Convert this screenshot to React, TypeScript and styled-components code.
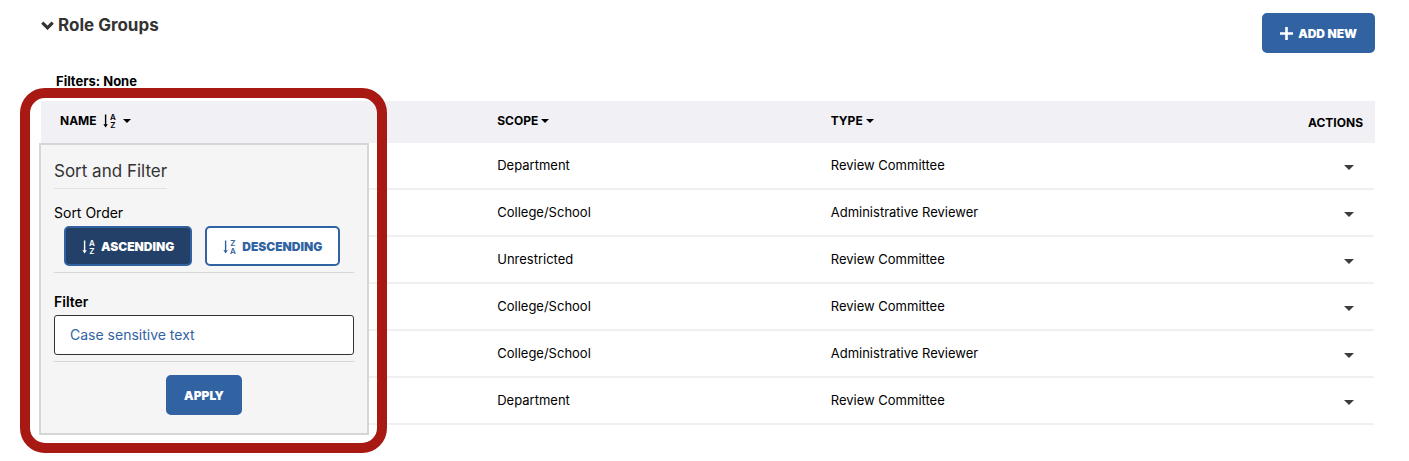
import React from "react";
import styled, { createGlobalStyle, css } from "styled-components";

const BLUE = "#3163a3";
const NAVY = "#234168";

const GlobalStyle = createGlobalStyle`
  *, *::before, *::after { box-sizing: border-box; }
  body {
    margin: 0;
    background: #fff;
    color: #000;
    font-family: Inter, "Liberation Sans", sans-serif;
    font-size: 13px;
    line-height: 20px;
  }
  button, input { font: inherit; }
`;

const Page = styled.main`
  padding: 13px 34px 36px 41px;
`;

const SectionHeader = styled.header`
  display: flex;
  align-items: flex-start;
  justify-content: space-between;
`;

const SectionTitle = styled.h2`
  margin: 0;
  font-size: 17px;
  font-weight: 700;
  line-height: 24px;
  color: #333;
`;

const SectionToggle = styled.button`
  display: flex;
  align-items: center;
  gap: 4px;
  padding: 0;
  border: 0;
  background: none;
  color: inherit;
  cursor: pointer;
`;

const Button = styled.button<{ $variant?: "solid" | "pressed" | "outline" }>`
  display: inline-flex;
  align-items: center;
  justify-content: center;
  gap: 5px;
  height: 40px;
  padding: 1px 16px 0;
  border: 2px solid ${BLUE};
  border-radius: 5px;
  background: ${BLUE};
  color: #fff;
  font-size: 12px;
  font-weight: 900;
  white-space: nowrap;
  cursor: pointer;
  ${({ $variant }) => $variant === "pressed" && css`background: ${NAVY};`}
  ${({ $variant }) => $variant === "outline" && css`background: #fff; color: ${BLUE};`}
`;

const ActiveFilters = styled.p`
  margin: 18px 0 10px 15px;
  font-weight: 700;
`;

const TableArea = styled.div`
  position: relative;
`;

const Table = styled.table`
  width: 100%;
  table-layout: fixed;
  border-collapse: separate;
  border-spacing: 0;
`;

const HeadCell = styled.th<{ $width?: string; $align?: "right" }>`
  width: ${({ $width }) => $width ?? "auto"};
  height: 42px;
  padding: ${({ $align }) => ($align ? "2px 12px 0 0" : "0 0 2px 16px")};
  background: #f1f0f5;
  font-size: 12px;
  font-weight: 700;
  text-align: ${({ $align }) => $align ?? "left"};
  &:first-child { padding-left: 19px; }
`;

const SortButton = styled.button<{ $gap: number }>`
  display: flex;
  align-items: center;
  gap: ${({ $gap }) => $gap}px;
  padding: 0;
  border: 0;
  background: none;
  color: inherit;
  cursor: pointer;
`;

const Cell = styled.td<{ $align?: "right" }>`
  height: 47px;
  padding: 0 16px 2px;
  border-bottom: 2px solid #f0f0f0;
  text-align: ${({ $align }) => $align ?? "left"};
  &:last-child {
    padding-right: 19px;
    border-right: 2px solid #fff;
  }
`;

const RowMenuButton = styled.button`
  display: inline-flex;
  padding: 4px 0 0;
  border: 0;
  background: none;
  color: #3c3c3c;
  vertical-align: middle;
  cursor: pointer;
`;

const PopoverAnchor = styled.div`
  position: absolute;
  top: 42px;
  left: -2px;
  width: 330px;
`;

const Callout = styled.div`
  position: absolute;
  inset: -55px -18px -18px -19px;
  border: 10px solid #a71912;
  border-radius: 25px;
  pointer-events: none;
`;

const Popover = styled.form`
  padding: 15px 13px 18px;
  border: 2px solid #d6d6d6;
  background: #f5f5f5;
`;

const PopoverTitle = styled.h3`
  width: fit-content;
  margin: 0 0 14px;
  padding-bottom: 6px;
  border-bottom: 1px solid #e2e2e2;
  color: #333;
  font-size: 17px;
  font-weight: 400;
  line-height: 22px;
`;

const Group = styled.fieldset`
  min-width: 0;
  margin: 0;
  padding: 0 0 6px;
  border: 0;
  border-bottom: 1px solid #d6d6d6;
`;

const GroupLegend = styled.legend`
  padding: 0 0 3px;
  font-size: 14px;
`;

const OrderButtons = styled.div`
  display: flex;
  gap: 13px;
  padding-left: 10px;
`;

const FilterField = styled.div`
  margin-top: 19px;
  padding-bottom: 6px;
  border-bottom: 1px solid #d6d6d6;
`;

const FieldLabel = styled.label`
  display: block;
  padding-bottom: 3px;
  font-size: 14px;
  font-weight: 600;
`;

const TextInput = styled.input`
  display: block;
  width: 100%;
  height: 40px;
  padding: 0 15px 2px;
  border: 1px solid #333;
  border-radius: 3px;
  background: #fff;
  color: ${BLUE};
  font-size: 14px;
  &::placeholder { color: ${BLUE}; opacity: 1; }
`;

const PopoverFooter = styled.div`
  display: flex;
  justify-content: center;
  padding-top: 13px;
`;

const IconLetter = styled.text`
  font-family: Inter, sans-serif;
  font-size: 8px;
  font-weight: 600;
  line-height: 8px;
  fill: currentColor;
`;

const SortGlyph = styled.svg`
  flex: none;
  overflow: visible;
`;

const Caret = ({ width = 8, height = 4 }: { width?: number; height?: number }) => (
  <svg width={width} height={height} viewBox="0 0 8 4" aria-hidden="true">
    <path d="M0 0h8L4 4z" fill="currentColor" />
  </svg>
);

const ChevronDown = () => (
  <svg width="13" height="9" viewBox="0 0 13 9" fill="none" aria-hidden="true">
    <path d="M1.3 1.6 6.5 6.8l5.2-5.2" stroke="currentColor" strokeWidth="3.2" />
  </svg>
);

const Plus = () => (
  <svg width="13" height="13" viewBox="0 0 13 13" fill="none" aria-hidden="true">
    <path d="M6.5 0v13M0 6.5h13" stroke="currentColor" strokeWidth="2.6" />
  </svg>
);

const SortIcon = ({ top, bottom }: { top: string; bottom: string }) => (
  <SortGlyph width="14" height="18" viewBox="0 0 14 18" aria-hidden="true">
    <path d="M1.9 2.5h1.4v9.8h1.5L2.6 15.6 0.4 12.3h1.5z" fill="currentColor" />
    <IconLetter x="9.8" y="8" textAnchor="middle">{top}</IconLetter>
    <IconLetter x="9.8" y="15.6" textAnchor="middle">{bottom}</IconLetter>
  </SortGlyph>
);

const roleGroups = [
  { scope: "Department", type: "Review Committee" },
  { scope: "College/School", type: "Administrative Reviewer" },
  { scope: "Unrestricted", type: "Review Committee" },
  { scope: "College/School", type: "Review Committee" },
  { scope: "College/School", type: "Administrative Reviewer" },
  { scope: "Department", type: "Review Committee" },
];

const SortFilterPopover = () => (
  <PopoverAnchor>
    <Popover onSubmit={(e) => e.preventDefault()}>
      <PopoverTitle>Sort and Filter</PopoverTitle>
      <Group>
        <GroupLegend>Sort Order</GroupLegend>
        <OrderButtons>
          <Button type="button" $variant="pressed" aria-pressed="true">
            <SortIcon top="A" bottom="Z" />
            ASCENDING
          </Button>
          <Button type="button" $variant="outline" aria-pressed="false">
            <SortIcon top="Z" bottom="A" />
            DESCENDING
          </Button>
        </OrderButtons>
      </Group>
      <FilterField>
        <FieldLabel htmlFor="name-filter">Filter</FieldLabel>
        <TextInput id="name-filter" type="text" placeholder="Case sensitive text" />
      </FilterField>
      <PopoverFooter>
        <Button type="submit">APPLY</Button>
      </PopoverFooter>
    </Popover>
    <Callout />
  </PopoverAnchor>
);

export default function App() {
  return (
    <>
      <GlobalStyle />
      <Page>
        <SectionHeader>
          <SectionTitle>
            <SectionToggle type="button" aria-expanded="true">
              <ChevronDown />
              Role Groups
            </SectionToggle>
          </SectionTitle>
          <Button type="button">
            <Plus />
            ADD NEW
          </Button>
        </SectionHeader>
        <ActiveFilters>Filters: None</ActiveFilters>
        <TableArea>
          <Table>
            <thead>
              <tr>
                <HeadCell $width="33%">
                  <SortButton type="button" $gap={6} aria-expanded="true">
                    NAME
                    <SortIcon top="A" bottom="Z" />
                    <Caret />
                  </SortButton>
                </HeadCell>
                <HeadCell $width="25%">
                  <SortButton type="button" $gap={3}>
                    SCOPE
                    <Caret />
                  </SortButton>
                </HeadCell>
                <HeadCell>
                  <SortButton type="button" $gap={3}>
                    TYPE
                    <Caret />
                  </SortButton>
                </HeadCell>
                <HeadCell $width="10%" $align="right">ACTIONS</HeadCell>
              </tr>
            </thead>
            <tbody>
              {roleGroups.map((group, index) => (
                <tr key={index}>
                  <Cell />
                  <Cell>{group.scope}</Cell>
                  <Cell>{group.type}</Cell>
                  <Cell $align="right">
                    <RowMenuButton type="button" aria-label="Row actions">
                      <Caret width={10} height={5} />
                    </RowMenuButton>
                  </Cell>
                </tr>
              ))}
            </tbody>
          </Table>
          <SortFilterPopover />
        </TableArea>
      </Page>
    </>
  );
}
